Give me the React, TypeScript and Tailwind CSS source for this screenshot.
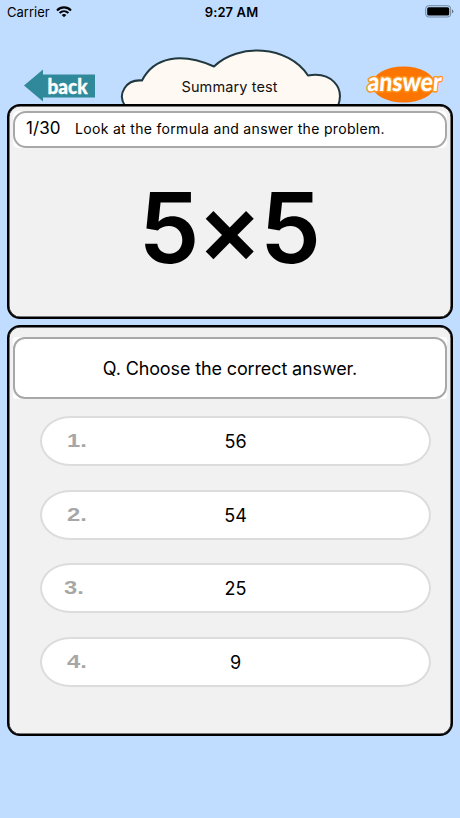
import React from "react";

const answers = [
  { label: "1.", value: "56", shift: "left-[25px]" },
  { label: "2.", value: "54", shift: "left-[25px]" },
  { label: "3.", value: "25", shift: "left-[22px]" },
  { label: "4.", value: "9", shift: "left-[25px]" },
];

function StatusBar() {
  return (
    <div className="grid h-6 grid-cols-3 items-center pl-[7px] pr-[6px] text-[13px] leading-6">
      <div className="flex items-center gap-[6px]">
        <span>Carrier</span>
        <svg width="16" height="12" viewBox="0 0 16 12" fill="none" stroke="#000" strokeWidth="2.1">
          <path d="M1 4.4C5 .4 11 .4 15 4.4" />
          <path d="M3.6 7.1c2.6-2.5 6.2-2.5 8.8 0" />
          <path d="M5.7 8.9c1.4-1.2 3.2-1.2 4.6 0L8 11.3z" fill="#000" stroke="none" />
        </svg>
      </div>
      <span className="pl-[2px] text-center font-semibold tracking-[0.1px]">9:27 AM</span>
      <svg className="-mt-[2px] justify-self-end" width="29" height="13" viewBox="0 0 29 13">
        <rect x=".7" y=".7" width="25" height="11.3" rx="3" fill="none" stroke="#7187a1" strokeWidth="1" />
        <rect x="2.2" y="2.2" width="22" height="8.3" rx="1.6" fill="#000" />
        <path d="M27 4.5c1.9.7 1.9 3.1 0 3.8z" fill="#60738b" />
      </svg>
    </div>
  );
}

function Header() {
  return (
    <div className="flex h-20 items-end">
      <svg className="shrink-0" width="120" height="80" viewBox="0 24 120 80">
        <path d="M24 85.500L43 69.500V74.500H95V97.500H43V101.500Z" fill="#30899a" />
        <text x="47.500" y="93.500" textLength="40" lengthAdjust="spacingAndGlyphs" fontFamily="Lato, sans-serif" fontWeight="900" fontSize="21" fill="#fff" stroke="#fff" strokeWidth=".4">back</text>
      </svg>
      <svg className="shrink-0 overflow-visible" width="230" height="80" viewBox="120 24 230 80">
        <path d="M125 106C117 94 126 79 142 80.500C154 57 181 52 214 66.500C238 43 288 45 308 75.500C331 71.500 345 87 338 106Z" fill="#fff9f3" stroke="#20383e" strokeWidth="2" strokeLinejoin="round" />
        <text x="181.500" y="91.500" textLength="96" fontFamily="Inter, sans-serif" fontSize="14.500" fill="#111">Summary test</text>
      </svg>
      <svg className="shrink-0 overflow-visible" width="110" height="80" viewBox="350 24 110 80">
        <ellipse cx="403.500" cy="84.500" rx="31.500" ry="18" fill="#fb7500" />
        <text transform="translate(367 91) skewX(-5)" textLength="74" lengthAdjust="spacingAndGlyphs" fontFamily="Lato, sans-serif" fontWeight="900" fontSize="26" fill="#fff" stroke="#ff9420" strokeWidth="3" strokeLinejoin="round" paintOrder="stroke">answer</text>
      </svg>
    </div>
  );
}

export default function App() {
  return (
    <main className="flex h-[818px] w-[460px] flex-col overflow-hidden bg-[#c0dcff] font-['Inter',sans-serif] text-black">
      <StatusBar />
      <Header />
      <section className="relative mx-[7px] flex h-[215px] shrink-0 flex-col rounded-[13px] border-2 border-black bg-[#f1f1f1] px-[4px] pt-[5px] shadow-[inset_0_0_0_0.5px_#000]">
        <div className="shrink-0 rounded-[5px] bg-white">
          <div className="flex h-[37px] items-center rounded-[13px] border-2 border-[#a8a8a8] bg-white pb-[2px] pl-[11px]">
            <span className="w-[49px] pt-px text-[17px] tracking-[0.05px]">1/30</span>
            <span className="whitespace-nowrap text-[14px] tracking-[0.32px]">Look at the formula and answer the problem.</span>
          </div>
        </div>
        <div className="flex h-[158px] items-center justify-center pr-[3px] text-[97px] font-semibold leading-none tracking-[-2.5px]">5×5</div>
      </section>
      <section className="mx-[7px] mt-[6px] flex h-[411px] shrink-0 flex-col rounded-[13px] border-2 border-black bg-[#f1f1f1] px-[4px] pt-[10px] shadow-[inset_0_0_0_0.5px_#000]">
        <div className="shrink-0 rounded-[3px] bg-white">
          <div className="flex h-[62px] items-center justify-center rounded-[12px] border-2 border-[#a8a8a8] bg-white text-[18px] tracking-[-0.13px]">
            Q. Choose the correct answer.
          </div>
        </div>
        <div className="ml-[27px] mr-[16px] mt-[17px] flex flex-col gap-[23.5px]">
          {answers.map(({ label, value, shift }) => (
            <div key={label} className="relative flex h-[50px] items-center justify-center rounded-[30px/25px] border-2 border-[#dcdcdc] bg-white">
              <span className={`absolute top-[9px] origin-left scale-x-125 font-['Liberation_Sans',sans-serif] text-[19px] leading-[27px] font-bold text-[#a7a7a7] ${shift}`}>{label}</span>
              <span className="pt-[2px] text-[18px] leading-6">{value}</span>
            </div>
          ))}
        </div>
      </section>
    </main>
  );
}
